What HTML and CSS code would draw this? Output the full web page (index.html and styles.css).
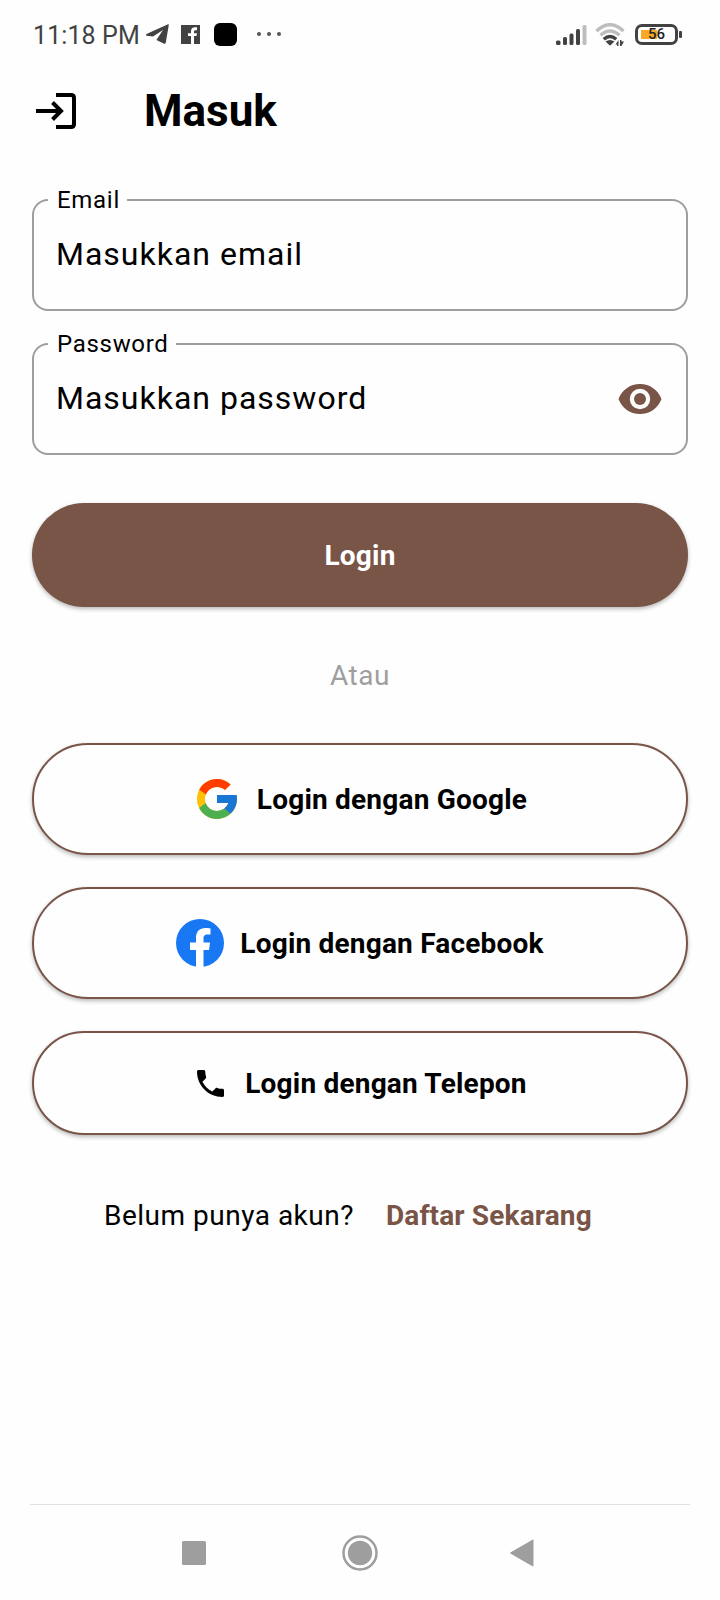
FILE: index.html
```html
<!DOCTYPE html>
<html lang="id">
<head>
<meta charset="utf-8">
<title>Masuk</title>
<link rel="stylesheet" href="styles.css">
</head>
<body>
<div class="screen">
  <div class="status">
    <span class="clock">11:18 PM</span>
    <svg class="telegram" width="24" height="22" viewBox="0 0 24 22"><path fill="#424242" d="M1.500 11L23 1.300Q24 1 23.800 2L20.800 19.500Q20.400 21.400 18.600 20.600L11.400 17 18 7 8 13.600 1.500 12.700Q.2 12 1.500 11Z"/></svg>
    <svg class="fb-small" width="19" height="19" viewBox="0 0 19 19"><path fill="#424242" d="M0 0h19v19H0z"/><path fill="#fff" d="M10 19v-8H7V8.300h3V6.500C10 3.700 11.500 2.300 14 2.300h2v3h-1.500C13.400 5.300 13 5.800 13 6.800v1.500h3L15.500 11H13v8z"/></svg>
    <span class="app-dot"></span>
    <span class="more"><i></i><i></i><i></i></span>
    <svg class="signal" width="32" height="22" viewBox="0 0 32 22"><g fill="#424242"><rect y="15.500" width="4.500" height="4.500" rx="1.500"/><rect x="7" y="12" width="4" height="8" rx="1.500"/><rect x="13.500" y="8.500" width="4" height="11.500" rx="1.500"/><rect x="20" y="4" width="4" height="16" rx="1.500"/></g><rect x="26.500" width="4" height="20" rx="1.500" fill="#bdbdbd"/></svg>
    <svg class="wifi" width="32" height="24" viewBox="0 0 32 24"><g fill="none" stroke-width="3.400"><path stroke="#bdbdbd" d="M1.500 8Q15 -4.500 28.500 8M5.500 12.300Q15 3.800 24.500 12.300"/><path stroke="#424242" d="M8.800 16.300Q15 10.800 21.200 16.300"/></g><path fill="#424242" d="M10.500 18.500Q15 15.500 19.500 18.500L15.500 22.200Q15 22.600 14.500 22.200zM20.500 21.500l3-4.500v6h-1.400v-1.500zM25 23v-6h1.400v1.500H29l-2.600 4.500z"/></svg>
    <div class="battery"><span>56</span></div>
  </div>

  <header class="header">
    <svg width="42" height="38" viewBox="0 0 42 38" fill="none" stroke="#000" stroke-width="4"><path d="M21 3H36Q39 3 39 6V32Q39 35 36 35H21M1 19H26M17.500 10.500L26 19L17.500 27.500"/></svg>
    <h1>Masuk</h1>
  </header>

  <main class="form">
    <div class="field">
      <label class="label label-email">Email</label>
      <span class="value">Masukkan email</span>
    </div>
    <div class="field">
      <label class="label label-password">Password</label>
      <span class="value">Masukkan password</span>
      <svg class="eye" width="44" height="30" viewBox="0 0 44 30"><path fill="#795548" fill-rule="evenodd" d="M.5 15C4 6 12 0 22 0s18 6 21.500 15C40 24 32 30 22 30S4 24 .5 15zM22 4.800a10.200 10.200 0 1 0 0 20.400 10.200 10.200 0 0 0 0-20.400z"/><circle cx="22" cy="15" r="6" fill="#795548"/></svg>
    </div>

    <div class="btn primary"><span>Login</span></div>
    <p class="or">Atau</p>

    <div class="btn outlined google">
      <svg width="40" height="40" viewBox="4 4 40 40"><path fill="#ffc107" d="M43.611 20.083H42V20H24v8h11.303c-1.649 4.657-6.080 8-11.303 8-6.627 0-12-5.373-12-12s5.373-12 12-12c3.059 0 5.842 1.154 7.961 3.039l5.657-5.657C34.046 6.053 29.268 4 24 4 12.955 4 4 12.955 4 24s8.955 20 20 20 20-8.955 20-20c0-1.341-.138-2.650-.389-3.917z"/><path fill="#ff3d00" d="M6.306 14.691l6.571 4.819C14.655 15.108 18.961 12 24 12c3.059 0 5.842 1.154 7.961 3.039l5.657-5.657C34.046 6.053 29.268 4 24 4 16.318 4 9.656 8.337 6.306 14.691z"/><path fill="#4caf50" d="M24 44c5.166 0 9.860-1.977 13.409-5.192l-6.190-5.238A11.910 11.910 0 0 1 24 36c-5.202 0-9.619-3.317-11.283-7.946l-6.522 5.025C9.505 39.556 16.227 44 24 44z"/><path fill="#1976d2" d="M43.611 20.083H42V20H24v8h11.303a12.040 12.040 0 0 1-4.087 5.571l6.193 5.238C36.971 39.205 44 34 44 24c0-1.341-.138-2.650-.389-3.917z"/></svg>
      <span>Login dengan Google</span>
    </div>
    <div class="btn outlined facebook">
      <svg width="48" height="48" viewBox="0 0 48 48"><circle cx="24" cy="24" r="24" fill="#1877f2"/><path fill="#fff" d="M20 48V31h-6v-7.500h6V19c0-6.500 3.500-10 9.500-10 2.200 0 5 .4 5 .4v6h-3c-3.200 0-4 1.800-4 3.800v4.300H34L33 31h-5.500v17z"/></svg>
      <span>Login dengan Facebook</span>
    </div>
    <div class="btn outlined phone">
      <svg width="27" height="27" viewBox="3 3 18 18"><path d="M6.620 10.790c1.440 2.830 3.760 5.140 6.590 6.590l2.200-2.200c.27-.27.67-.36 1.020-.24 1.120.37 2.330.57 3.570.57.55 0 1 .45 1 1V20c0 .55-.45 1-1 1-9.390 0-17-7.610-17-17 0-.55.45-1 1-1h3.500c.55 0 1 .45 1 1 0 1.250.2 2.450.57 3.570.11.35.03.74-.25 1.020l-2.200 2.200z"/></svg>
      <span>Login dengan Telepon</span>
    </div>
    <p class="signup"><span>Belum punya akun?</span><b>Daftar Sekarang</b></p>
  </main>

  <nav class="nav">
    <svg width="24" height="24" viewBox="0 0 24 24"><rect width="24" height="24" rx="1.500" fill="#9e9e9e"/></svg>
    <svg class="home" width="36" height="36" viewBox="0 0 36 36"><circle cx="18" cy="18" r="16.500" fill="none" stroke="#9e9e9e" stroke-width="2.500"/><circle cx="18" cy="18" r="12.200" fill="#9e9e9e"/></svg>
    <svg width="24" height="28" viewBox="0 0 24 28"><path fill="#9e9e9e" d="M.8 13.200L22 .9Q23.500 0 23.500 1.500V26.500Q23.500 28 22 27.100L.8 14.800Q-.5 14 .8 13.200z"/></svg>
  </nav>
</div>
</body>
</html>
```
FILE: styles.css
```css
* { box-sizing: border-box; }
body { margin: 0; background: #fefefe; font-family: Roboto, sans-serif; color: #000; }
svg { display: block; flex: none; }
.screen { width: 720px; height: 1600px; display: flex; flex-direction: column; overflow: hidden; }

.status { height: 68px; padding-left: 33px; display: flex; align-items: center; color: #424242; }
.clock { width: 112px; font-size: 25px; line-height: 30px; white-space: nowrap; padding-top: 3px; letter-spacing: .1px; }
.fb-small { margin-left: 12px; }
.app-dot { width: 23px; height: 23px; margin-left: 14px; border-radius: 6px; background: #000; }
.more { display: flex; gap: 6px; margin-left: 20px; }
.more i { width: 4px; height: 4px; border-radius: 50%; background: #555; }
.signal { margin-left: 275px; margin-top: 4px; }
.wifi { margin-left: 7px; margin-top: 2px; }
.battery { position: relative; width: 43px; height: 21px; margin-left: 8px; border: 3px solid #424242; border-radius: 7px; padding: 1px 0; background: linear-gradient(#f9a825, #f9a825) 3px 3px / 16px 9px no-repeat; }
.battery span { display: block; font-size: 15px; font-weight: 500; line-height: 13px; text-align: center; color: #222; }
.battery::after { content: ""; position: absolute; right: -7px; top: 4px; width: 3px; height: 7px; border-radius: 1px; background: #424242; }

.header { height: 84px; padding: 1px 0 0 35px; display: flex; align-items: center; gap: 67px; }
.header h1 { margin: 0; font-size: 44px; line-height: 52px; font-weight: 700; }

.form { padding: 47px 32px 0; flex: 1; }
.field { position: relative; height: 112px; margin-bottom: 32px; padding: 0 24px 0 22px; display: flex; align-items: center; justify-content: space-between; border: 2px solid #9e9e9e; border-radius: 16px; }
.label { position: absolute; left: 14px; top: -16px; padding: 0 0 0 9px; font-size: 24px; line-height: 30px; letter-spacing: .7px; background: #fefefe; }
.label-email { width: 79px; }
.label-password { width: 128px; }
.value { font-size: 32px; line-height: 40px; letter-spacing: 1px; padding-bottom: 2px; }

.btn { height: 104px; border-radius: 56px; display: flex; align-items: center; justify-content: center; font-size: 28px; line-height: 34px; font-weight: 700; letter-spacing: .2px; box-shadow: 0 2px 4px rgba(0, 0, 0, .28); }
.btn span { padding-top: 2px; }
.primary { margin-top: 48px; background: #795548; color: #fff; }
.or { margin: 51px 0 49px; font-size: 28px; line-height: 36px; letter-spacing: .5px; text-align: center; color: #9e9e9e; }
.outlined { margin-bottom: 32px; background: #fefefe; border: 2px solid #795548; }
.google { height: 112px; gap: 20px; padding-left: 4px; }
.facebook { height: 112px; gap: 16px; }
.phone { gap: 21px; padding-left: 4px; }
.signup { margin: 61px 0 0; padding-left: 72px; display: flex; gap: 32px; font-size: 28px; line-height: 40px; white-space: nowrap; letter-spacing: .5px; }
.signup b { color: #795548; letter-spacing: .15px; }

.nav { height: 96px; margin: 0 30px; padding: 0 156px 0 152px; display: flex; align-items: center; justify-content: space-between; border-top: 1px solid #e0e0e0; }
.home { margin-left: 3px; }
```
